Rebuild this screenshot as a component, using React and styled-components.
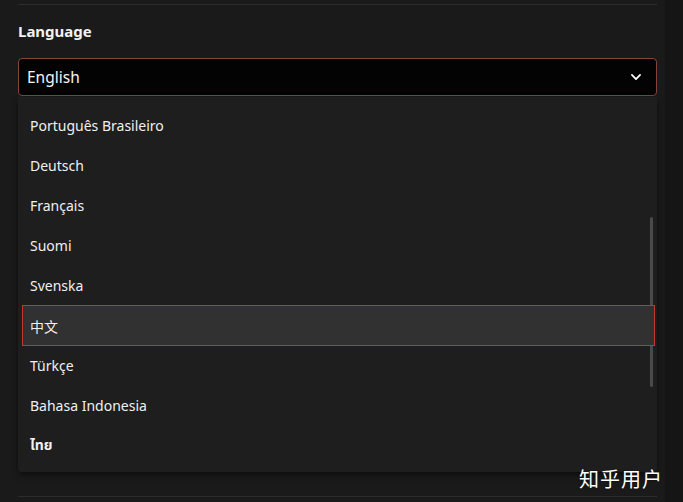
import React, { useState } from "react";
import styled, { createGlobalStyle } from "styled-components";

const GlobalStyle = createGlobalStyle`
  html, body {
    margin: 0;
    padding: 0;
    background: #181818;
  }
  body {
    font-family: "Noto Sans", "Noto Sans Thai", "Noto Sans CJK SC", sans-serif;
    color: #e8e8e8;
  }
`;

const languages = [
  "Português Brasileiro",
  "Deutsch",
  "Français",
  "Suomi",
  "Svenska",
  "中文",
  "Türkçe",
  "Bahasa Indonesia",
  "ไทย",
];

export default function App() {
  const [selected, setSelected] = useState("中文");

  return (
    <>
      <GlobalStyle />
      <Page>
        <Divider />
        <Section>
          <Label>Language</Label>
          <Field>
            <SelectBox>
              <span>English</span>
              <svg width="14" height="14" viewBox="0 0 24 24" fill="none">
                <path
                  d="M5 8.5l7 7 7-7"
                  stroke="#fff"
                  strokeWidth="3"
                  strokeLinecap="round"
                  strokeLinejoin="round"
                />
              </svg>
            </SelectBox>
            <Menu>
              {languages.map((lang) => (
                <Option
                  key={lang}
                  $active={lang === selected}
                  $thai={lang === "ไทย"}
                  onClick={() => setSelected(lang)}
                >
                  {lang}
                </Option>
              ))}
              <ScrollThumb />
            </Menu>
          </Field>
        </Section>
        <BottomDivider />
        <Watermark>知乎用户</Watermark>
      </Page>
    </>
  );
}

const Page = styled.div`
  position: relative;
  width: 683px;
  height: 502px;
  overflow: hidden;
  padding: 4px 26px 0 18px;
  box-sizing: border-box;
  background: linear-gradient(to right, #1a1a1a 0, #1a1a1a 665px, #151515 665px);
`;

const Divider = styled.div`
  height: 1px;
  background: #2c2c2c;
`;

const Section = styled.div`
  display: flex;
  flex-direction: column;
  padding-top: 16px;
`;

const Label = styled.div`
  font-size: 15px;
  font-weight: 700;
  color: #f2f2f2;
  line-height: 21px;
  height: 21px;
`;

const Field = styled.div`
  margin-top: 16px;
  display: flex;
  flex-direction: column;
`;

const SelectBox = styled.div`
  height: 38px;
  box-sizing: border-box;
  display: flex;
  align-items: center;
  justify-content: space-between;
  padding: 0 13px 0 8px;
  background: #030303;
  border: 1px solid #84443a;
  border-radius: 4px;
  font-size: 15.5px;
  color: #f4f4f4;

  svg {
    display: block;
  }
`;

const Menu = styled.div`
  position: relative;
  margin-top: 1px;
  height: 375px;
  box-sizing: border-box;
  padding: 8px 2px 7px 4px;
  background: #1e1e1e;
  border-radius: 0 0 4px 4px;
  box-shadow: 0 3px 6px rgba(0, 0, 0, 0.5);
  display: flex;
  flex-direction: column;
`;

const Option = styled.div`
  position: relative;
  z-index: ${(p) => (p.$active ? 2 : 0)};
  height: ${(p) => (p.$active ? "41px" : "40px")};
  margin-bottom: ${(p) => (p.$active ? "-1px" : "0")};
  flex-shrink: 0;
  box-sizing: border-box;
  display: flex;
  align-items: center;
  padding-left: 7px;
  font-size: 14px;
  font-weight: ${(p) => (p.$thai ? 700 : 400)};
  color: #f0f0f0;
  cursor: pointer;
  background: ${(p) => (p.$active ? "#313131" : "transparent")};
  border: 1px solid ${(p) => (p.$active ? "#c0392b" : "transparent")};
`;

const ScrollThumb = styled.div`
  position: absolute;
  z-index: 1;
  right: 4px;
  top: 120px;
  width: 3px;
  height: 170px;
  border-radius: 2px;
  background: #4a4a4a;
`;

const BottomDivider = styled.div`
  margin-top: 24px;
  height: 1px;
  background: #2c2c2c;
`;

const Watermark = styled.div`
  position: absolute;
  left: 579px;
  top: 464px;
  font-family: "Noto Sans CJK SC", sans-serif;
  font-size: 20px;
  color: #ffffff;
  letter-spacing: 1px;
  text-shadow: 0 0 2px rgba(0, 0, 0, 0.6);
`;
